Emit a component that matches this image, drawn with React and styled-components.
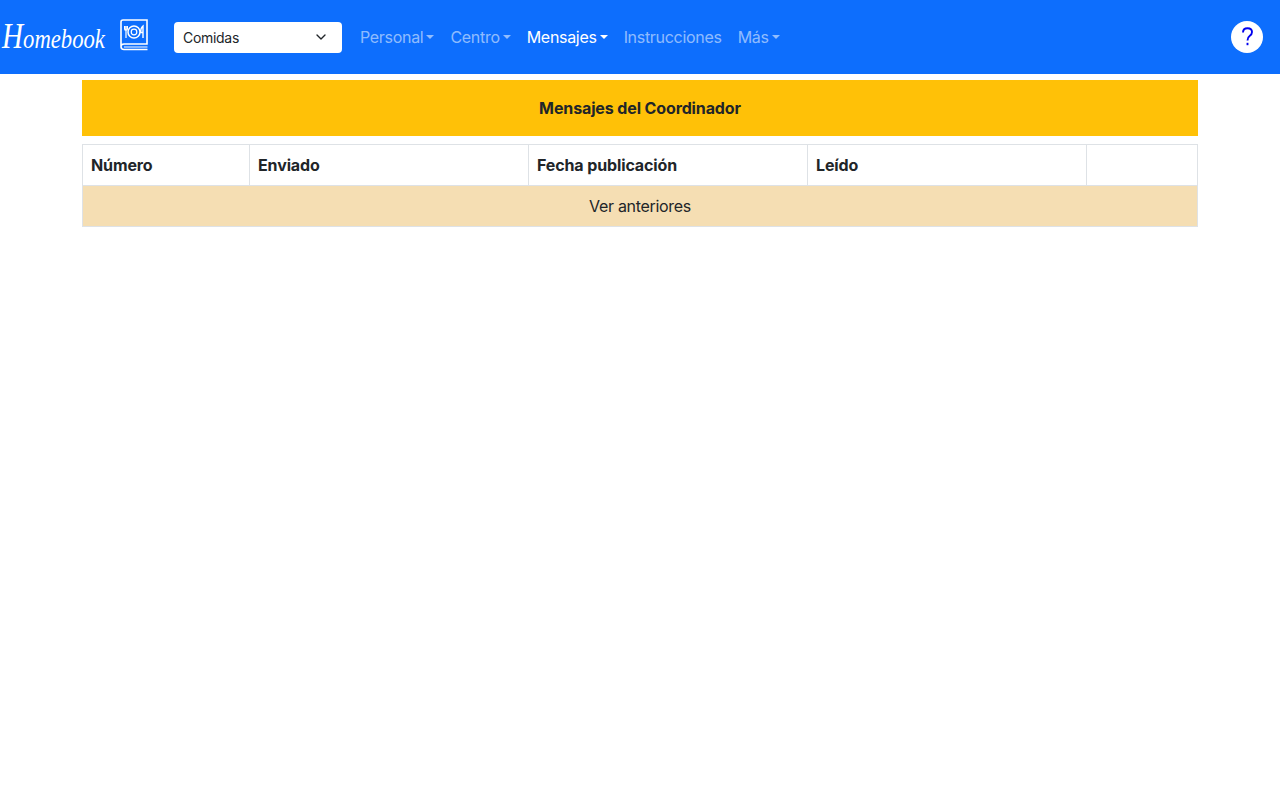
import React from "react";
import styled, { createGlobalStyle } from "styled-components";
import { FiChevronDown } from "react-icons/fi";

const GlobalStyle = createGlobalStyle`
  * {
    box-sizing: border-box;
  }

  body {
    margin: 0;
    background: #fff;
    color: #212529;
    font-family: Inter, "Liberation Sans", sans-serif;
    font-size: 16px;
    line-height: 1.5;
  }
`;

const Navbar = styled.nav`
  height: 74px;
  background: #0d6efd;
  display: flex;
  align-items: center;
  padding-right: 17px;
`;

const Brand = styled.a`
  display: flex;
  align-items: center;
  width: 174px;
  padding-left: 2px;
  color: #fff;
`;

const BrandText = styled.span`
  display: inline-block;
  width: 118px;
  font-family: "Liberation Serif", serif;
  font-style: italic;
  font-size: 28px;
  line-height: 40px;
  white-space: nowrap;
  transform: scaleX(0.81);
  transform-origin: left center;

  &::first-letter {
    font-size: 36px;
  }
`;

const BookSvg = styled.svg`
  margin-bottom: 4px;
`;

const SelectBox = styled.div`
  width: 168px;
  height: 31px;
  background: #fff;
  border-radius: 4px;
  display: flex;
  align-items: center;
  justify-content: space-between;
  padding: 0 13px 0 9px;
  font-size: 14px;
  letter-spacing: -0.3px;
  color: #212529;
  margin-right: 10px;
`;

const NavList = styled.div`
  display: flex;
  align-items: center;
  flex: 1;
`;

const NavLink = styled.a`
  display: flex;
  align-items: center;
  padding: 8px;
  letter-spacing: -0.3px;
  color: ${(props) => (props.active ? "#fff" : "rgba(255, 255, 255, 0.55)")};
`;

const Caret = styled.span`
  margin-left: 3px;
  border-top: 4.8px solid currentColor;
  border-left: 4.8px solid transparent;
  border-right: 4.8px solid transparent;
`;

const HelpButton = styled.button`
  width: 32px;
  height: 32px;
  border: none;
  border-radius: 50%;
  background: #fff;
  color: #0000ee;
  padding: 0;
  display: flex;
  align-items: center;
  justify-content: center;
`;

const Main = styled.main`
  padding: 6px 82px 0;
`;

const Banner = styled.div`
  height: 56px;
  background: #ffc107;
  display: flex;
  align-items: center;
  justify-content: center;
  font-weight: 700;
  letter-spacing: -0.12px;
  margin-bottom: 8px;
`;

const Table = styled.table`
  width: calc(100% - 1px);
  table-layout: fixed;
  border-collapse: collapse;
`;

const HeadCell = styled.th`
  width: ${(props) => props.size}px;
  height: 41px;
  padding: 8px;
  border: 1px solid #dee2e6;
  text-align: left;
  font-weight: 700;
  letter-spacing: -0.12px;
`;

const MoreCell = styled.td`
  height: 41px;
  padding: 8px;
  border: 1px solid #dee2e6;
  background: wheat;
  text-align: center;
  letter-spacing: -0.3px;
`;

const BookIcon = () => (
  <BookSvg width="28" height="32" viewBox="0 0 28 32" fill="none" stroke="#fff">
    <path
      d="M1 27V3Q1 1 3 1H27V25H4Q1 25 1 27.5Q1 30.5 4 30.5H27.5"
      strokeWidth="1.6"
    />
    <path d="M4 28H27.5" strokeWidth="1" />
    <circle cx="14" cy="13" r="6" strokeWidth="1.5" />
    <circle cx="14" cy="13" r="2.8" strokeWidth="1.2" />
    <path d="M4.6 7V10Q4.6 11.5 6 11.5Q7.4 11.5 7.4 10V7M6 7V19" strokeWidth="1.2" />
    <path d="M23 19V7Q20.6 9 20.6 13.5H23" strokeWidth="1.4" />
  </BookSvg>
);

const columns = [
  { label: "Número", size: 167 },
  { label: "Enviado", size: 279 },
  { label: "Fecha publicación", size: 279 },
  { label: "Leído", size: 279 },
  { label: "", size: 111 },
];

const navItems = [
  { label: "Personal", caret: true },
  { label: "Centro", caret: true },
  { label: "Mensajes", caret: true, active: true },
  { label: "Instrucciones" },
  { label: "Más", caret: true },
];

export default function App() {
  return (
    <>
      <GlobalStyle />
      <Navbar>
        <Brand>
          <BrandText>Homebook</BrandText>
          <BookIcon />
        </Brand>
        <SelectBox>
          Comidas
          <FiChevronDown size={16} />
        </SelectBox>
        <NavList>
          {navItems.map((item) => (
            <NavLink key={item.label} active={item.active}>
              {item.label}
              {item.caret && <Caret />}
            </NavLink>
          ))}
        </NavList>
        <HelpButton aria-label="Ayuda">
          <svg width="11" height="20" viewBox="0 0 11 20" fill="none" stroke="currentColor" strokeWidth="1.9">
            <path d="M1 5.5Q1 1.2 5.5 1.2Q10 1.2 10 5Q10 7.4 7.6 9Q5.5 10.4 5.5 13.5" />
            <path d="M5.5 15.8V18.2" />
          </svg>
        </HelpButton>
      </Navbar>
      <Main>
        <Banner>Mensajes del Coordinador</Banner>
        <Table>
          <thead>
            <tr>
              {columns.map((col) => (
                <HeadCell key={col.label} size={col.size}>
                  {col.label}
                </HeadCell>
              ))}
            </tr>
          </thead>
          <tbody>
            <tr>
              <MoreCell colSpan={5}>Ver anteriores</MoreCell>
            </tr>
          </tbody>
        </Table>
      </Main>
    </>
  );
}
